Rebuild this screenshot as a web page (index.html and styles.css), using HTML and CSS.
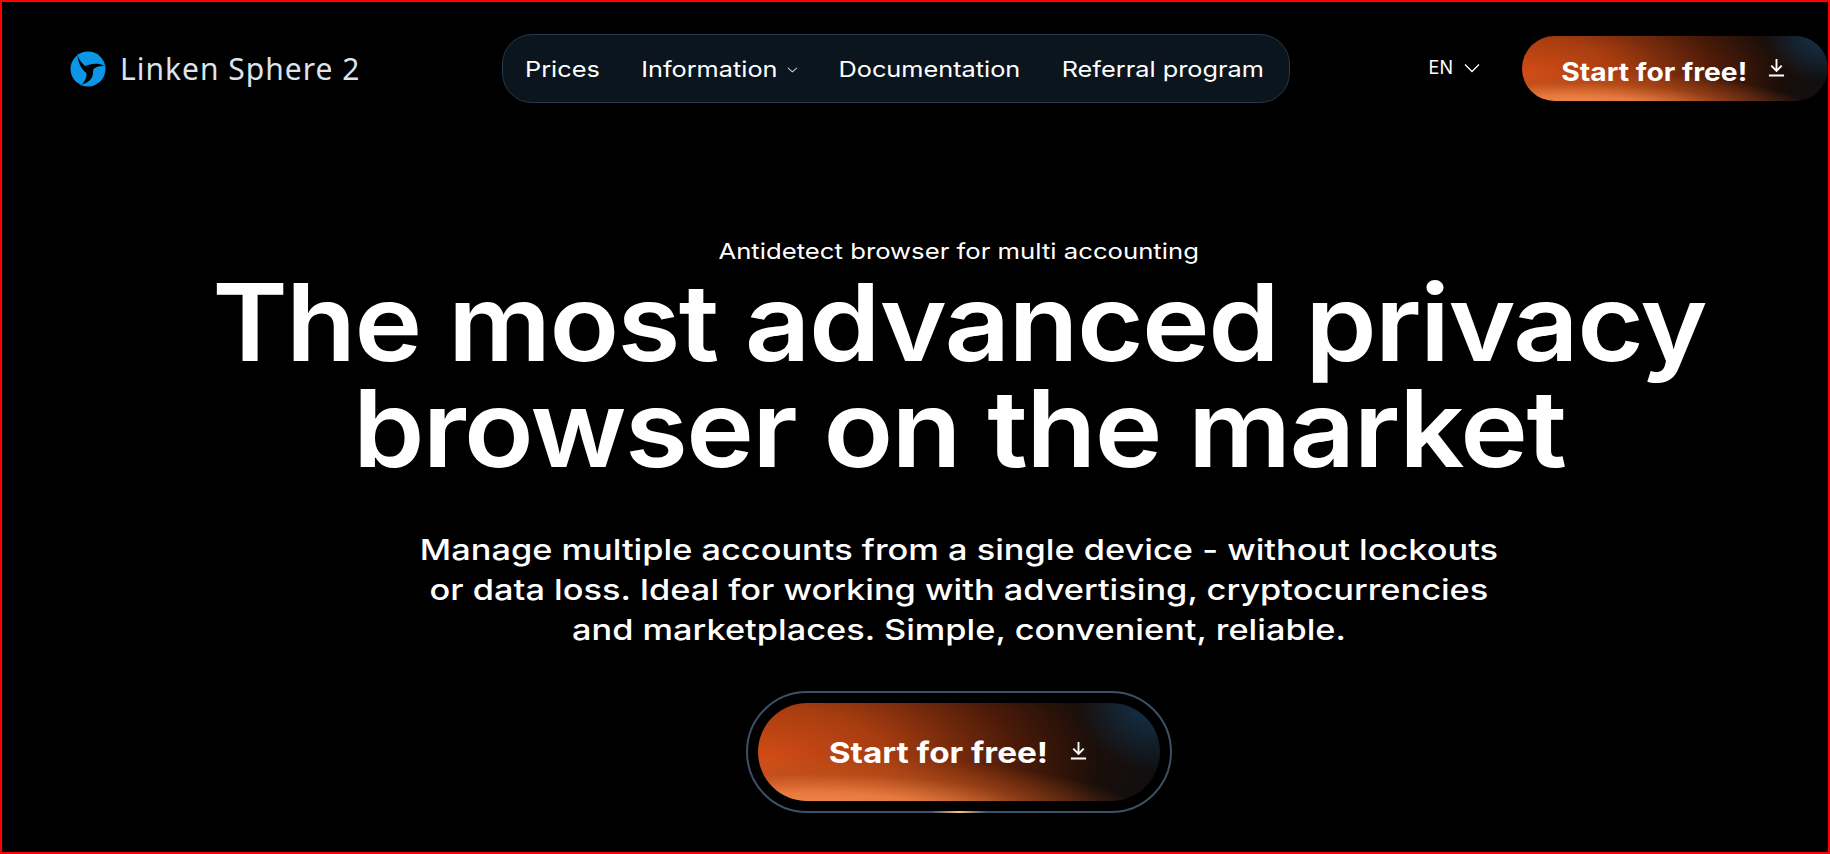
FILE: index.html
```html
<!DOCTYPE html>
<html lang="en">
<head>
    <meta charset="UTF-8">
    <meta name="viewport" content="width=device-width, initial-scale=1.0">
    <title>Linken Sphere 2</title>
    <link rel="stylesheet" href="styles.css">
</head>
<body>
    <header class="site-header">
        <a class="logo" href="#">
            <svg class="logo-icon" viewBox="0 0 36 36" width="36" height="36">
                <circle cx="18" cy="18" r="17.5" fill="#0b96e8"/>
                <path fill="#000" d="M7.5 4C9 9 12 12 15 15C20 13 28 11 34.500 15C29 14.500 25 16 23 19C24 26 20 31 12 33.500C15 30 17 26 16.500 22C12 19 8 12 7.5 4Z"/>
            </svg>
            <span class="logo-text">Linken Sphere 2</span>
        </a>

        <nav class="main-nav">
            <div class="nav-links">
                <a href="#">Prices</a>
                <a href="#">Information<svg class="chevron-small" viewBox="0 0 10 6" width="9" height="6"><path d="M0.500 0.500L5 5L9.500 0.500" fill="none" stroke="#d5dde4" stroke-width="1"/></svg></a>
                <a href="#">Documentation</a>
                <a href="#">Referral program</a>
            </div>
        </nav>

        <div class="header-actions">
            <button class="lang-btn">EN
                <svg viewBox="0 0 16 10" width="16" height="10"><path d="M1 1.500L8 8.500L15 1.500" fill="none" stroke="#fff" stroke-width="1.300"/></svg>
            </button>
            <a class="start-btn start-btn-small" href="#">
                <span class="btn-label">Start for free!</span>
                <svg class="btn-icon" viewBox="0 0 18 20" width="17" height="19"><path d="M9 1V13M3.500 8L9 13.500L14.500 8M1 18.500H17" fill="none" stroke="#fff" stroke-width="2"/></svg>
            </a>
        </div>
    </header>

    <main class="hero">
        <p class="eyebrow">Antidetect browser for multi accounting</p>
        <h1>The most advanced privacy<br>browser on the market</h1>
        <p class="lead">Manage multiple accounts from a single device - without lockouts<br>or data loss. Ideal for working with advertising, cryptocurrencies<br>and marketplaces. Simple, convenient, reliable.</p>
        <div class="cta-ring">
            <a class="start-btn start-btn-big" href="#">
                <span class="btn-label">Start for free!</span>
                <svg class="btn-icon" viewBox="0 0 18 20" width="17" height="19"><path d="M9 1V13M3.500 8L9 13.500L14.500 8M1 18.500H17" fill="none" stroke="#fff" stroke-width="2"/></svg>
            </a>
        </div>
    </main>
</body>
</html>
```

FILE: styles.css
```css
* {
    box-sizing: border-box;
}

html, body {
    margin: 0;
}

body {
    height: 854px;
    background-color: #000;
    border: 2px solid #f00;
    color: #fff;
    font-family: 'Inter', 'Liberation Sans', sans-serif;
    overflow: hidden;
}

a {
    color: inherit;
    text-decoration: none;
}

.site-header {
    display: flex;
    align-items: center;
    padding: 32px 0 0 68px;
}

.logo {
    display: flex;
    align-items: center;
    gap: 14px;
    width: 432px;
}

.logo-text {
    font-family: 'Noto Sans', sans-serif;
    font-size: 30px;
    font-weight: 400;
    letter-spacing: 1px;
    color: #dbe3ee;
}

.main-nav {
    width: 788px;
    height: 69px;
    padding: 0 22px;
    display: flex;
    align-items: center;
    background-color: #0b151d;
    border: 1px solid #25394f;
    border-radius: 30px;
    font-size: 22px;
    white-space: nowrap;
}

/* the original face is wider than anything installed */
.nav-links {
    display: flex;
    align-items: center;
    gap: 36px;
    transform: scaleX(1.15);
    transform-origin: left center;
}

.chevron-small {
    margin-left: 8px;
    vertical-align: 4px;
}

.header-actions {
    display: flex;
    align-items: center;
    gap: 42px;
    margin-left: auto;
}

.lang-btn {
    display: flex;
    align-items: center;
    gap: 11px;
    background: none;
    border: none;
    padding: 0;
    color: #fff;
    font-family: inherit;
    font-size: 18px;
    margin-top: -2px;
}

.start-btn {
    display: flex;
    align-items: center;
    justify-content: center;
    color: #fff;
    font-weight: 700;
    border-radius: 50px;
    background:
        radial-gradient(ellipse 20% 70% at 99% 0%, rgba(24, 66, 100, 0.75), transparent),
        radial-gradient(ellipse 80% 65% at 16% 118%, #f4945a 0%, rgba(238, 128, 68, 0.9) 40%, rgba(190, 84, 30, 0.55) 70%, transparent 100%),
        radial-gradient(ellipse 100% 180% at 0% 60%, #d54d16 0%, #a83d10 32%, #4a1a08 65%, #1a0e0a 85%, transparent 100%),
        #0e0f12;
}

.btn-label {
    display: inline-block;
    transform: scaleX(1.13);
}

.start-btn-small {
    width: 306px;
    height: 65px;
    gap: 32px;
    font-size: 25px;
    padding: 6px 0 0 7px;
}

.start-btn-small .btn-icon {
    margin-top: -9px;
}

.start-btn-big {
    width: 402px;
    height: 98px;
    gap: 36px;
    font-size: 29px;
    padding-left: 12px;
}

.start-btn-big .btn-label {
    transform: scaleX(1.15);
}

.start-btn-big .btn-icon {
    margin-top: -3px;
}

.hero {
    display: flex;
    flex-direction: column;
    align-items: center;
    padding-left: 88px;
}

.eyebrow {
    margin: 133px 0 0;
    font-size: 22px;
    line-height: 30px;
    transform: scaleX(1.168);
}

h1 {
    margin: 3px 0 0;
    font-size: 107px;
    line-height: 106px;
    font-weight: 600;
    letter-spacing: -1.5px;
    text-align: center;
    white-space: nowrap;
    transform: scaleX(1.07);
}

.lead {
    margin: 49px 0 0;
    font-size: 29px;
    line-height: 40px;
    font-weight: 500;
    text-align: center;
    white-space: nowrap;
    transform: scaleX(1.185);
}

.cta-ring {
    position: relative;
    margin-top: 41px;
    padding: 10px;
    border: 2px solid #3c5066;
    border-radius: 62px;
}

.cta-ring::after {
    content: '';
    position: absolute;
    left: 50%;
    bottom: -2px;
    width: 56px;
    height: 2px;
    transform: translateX(-50%);
    background: linear-gradient(to right, transparent, #f8c48a, transparent);
}
```
